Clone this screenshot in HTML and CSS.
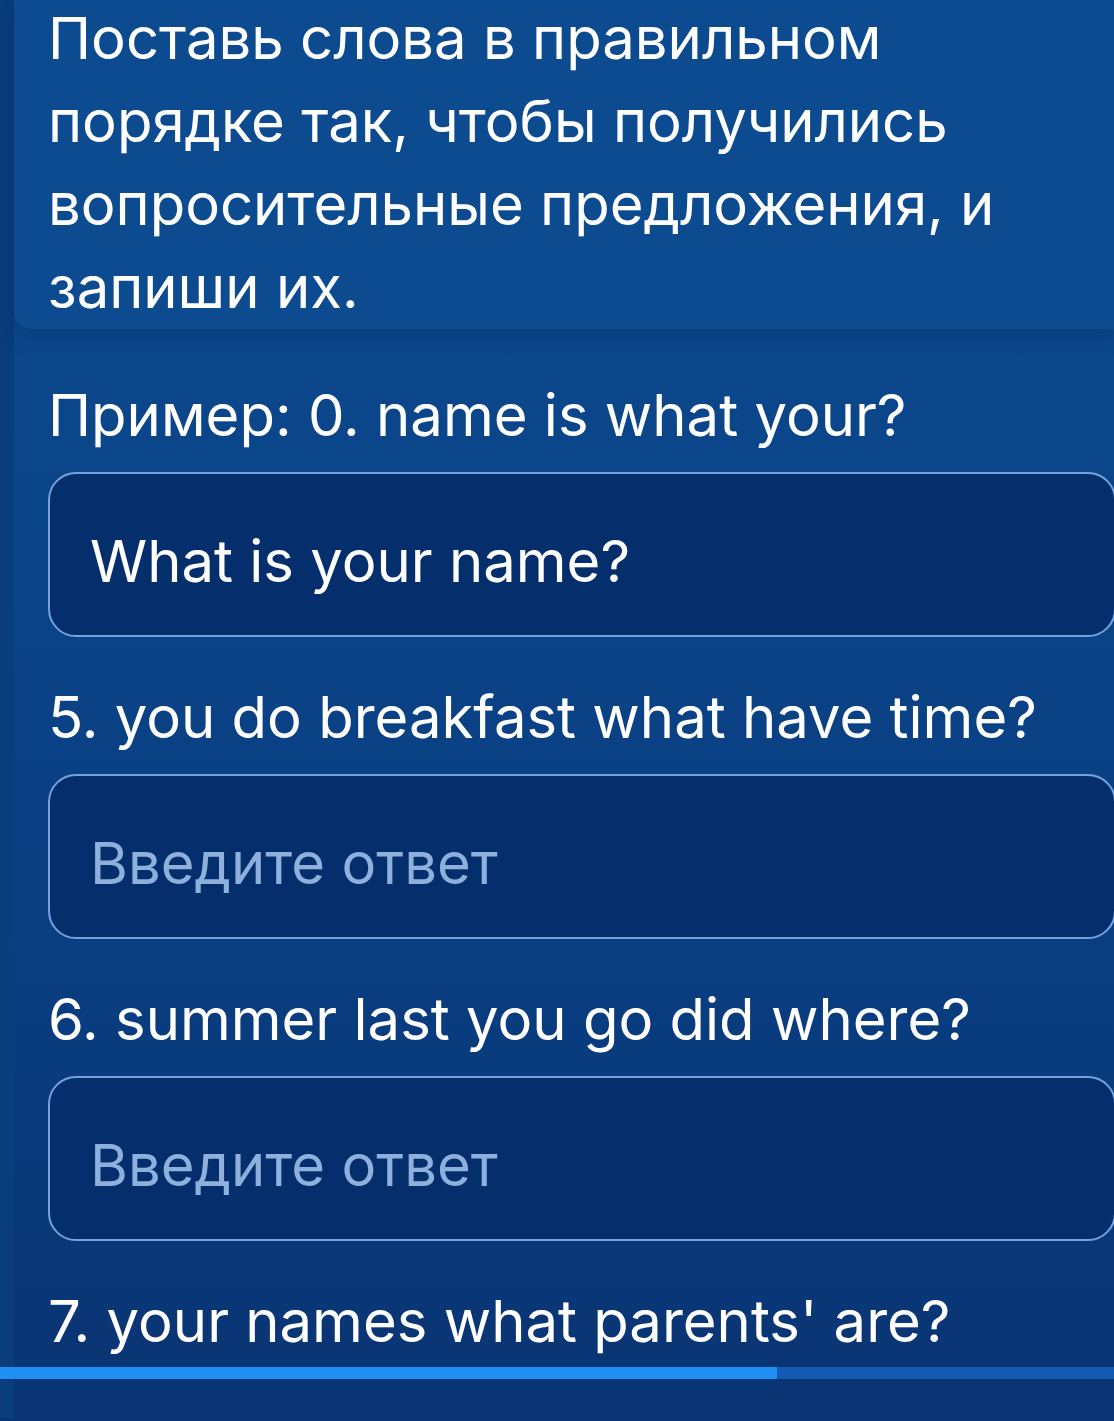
FILE: index.html
```html
<!DOCTYPE html>
<html lang="ru">
<head>
<meta charset="utf-8">
<link rel="stylesheet" href="styles.css">
</head>
<body>
<div class="screen">
  <div class="task-card">
    <p class="task-text">Поставь слова в правильном порядке так, чтобы получились вопросительные предложения, и запиши их.</p>
  </div>
  <div class="content">
    <p class="question">Пример: 0. name is what your?</p>
    <div class="answer filled">What is your name?</div>
    <p class="question">5. you do breakfast what have time?</p>
    <div class="answer placeholder">Введите ответ</div>
    <p class="question">6. summer last you go did where?</p>
    <div class="answer placeholder">Введите ответ</div>
    <p class="question q-last">7. your names what parents' are?</p>
  </div>
  <div class="progress"><div class="progress-fill" style="width:777px"></div></div>
</div>
</body>
</html>
```
FILE: styles.css
```css
html, body {
  margin: 0;
  padding: 0;
}
body {
  width: 1114px;
  height: 1421px;
  overflow: hidden;
  font-family: Inter, "Noto Sans", sans-serif;
  color: #ffffff;
  background: linear-gradient(180deg, #0c4a8f 0%, #0b4589 35%, #093d7f 70%, #0a3473 100%);
}
.screen {
  height: 1421px;
  border-left: 14px solid #0a3d7c;
  box-sizing: border-box;
}
.task-card {
  background: #0d4b90;
  box-shadow: 0 8px 22px rgba(4, 30, 80, 0.22);
  border-radius: 0 0 0 16px;
  padding: 0 0 0 34px;
  height: 332px;
}
.task-text {
  margin: -3px 0 0;
  width: 1010px;
  font-size: 58px;
  line-height: 83px;
  font-weight: 400;
}
.content {
  padding: 45px 0 0 34px;
}
.question {
  margin: 0;
  font-size: 58px;
  line-height: 83px;
  font-weight: 400;
  white-space: nowrap;
}
.answer {
  margin: 15px -2px 39px 0;
  height: 165px;
  box-sizing: border-box;
  border: 2px solid #74a2dd;
  border-radius: 28px;
  background: #052f6c;
  padding: 52px 0 0 40px;
  font-size: 58px;
  line-height: 70px;
  white-space: nowrap;
}
.filled {
  color: #ffffff;
}
.placeholder {
  color: #8db0dc;
}
.q-last {
  margin-bottom: 4px;
}
.progress {
  margin: 0 0 0 -14px;
  height: 12px;
  background: #1459b2;
}
.progress-fill {
  height: 12px;
  background: #1e8ef2;
}
```
